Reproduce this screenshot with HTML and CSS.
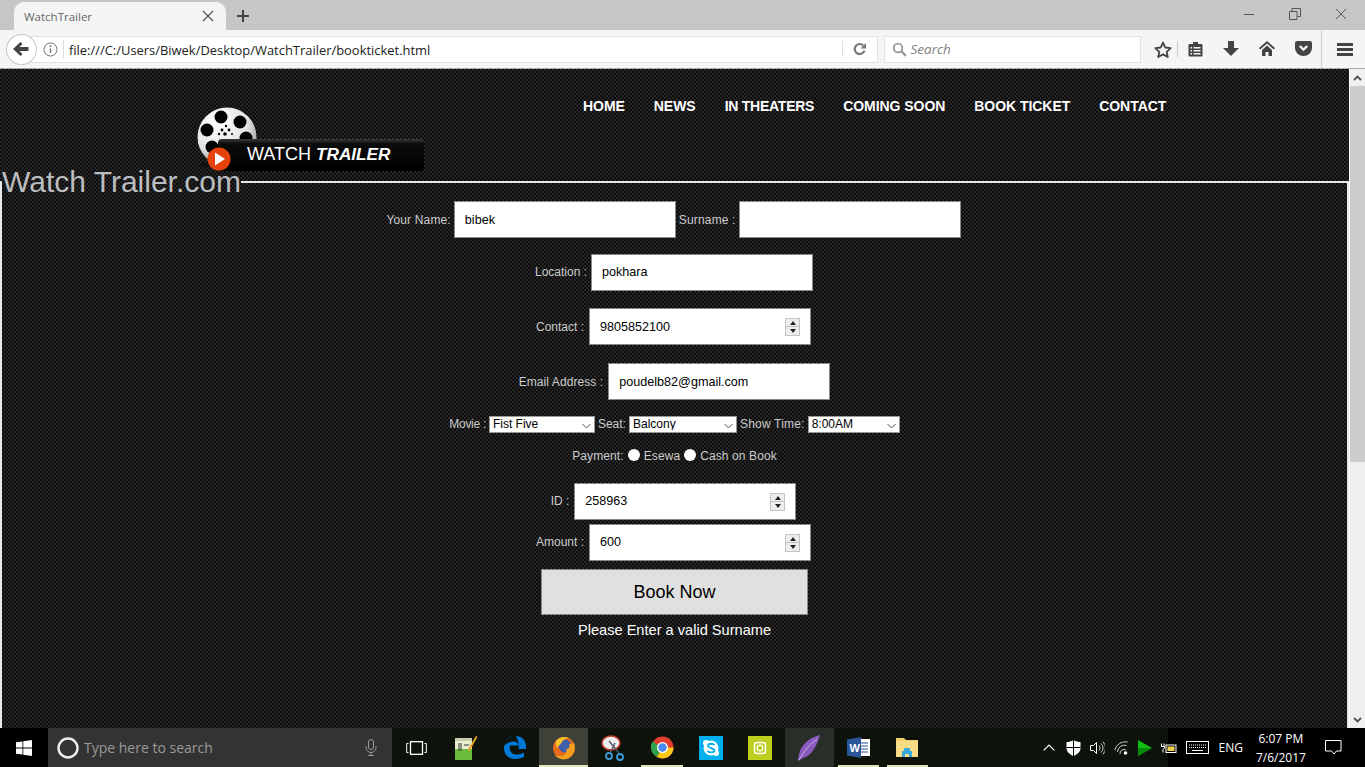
FILE: index.html
```html
<!DOCTYPE html>
<html lang="en">
  <head>
    <meta charset="UTF-8" />
    <title>WatchTrailer</title>
    <link rel="stylesheet" href="styles.css">
  </head>
  <body>
    <div class="tabbar">
      <div class="tab">
        <span class="tab-title">WatchTrailer</span>
        <svg class="tab-close" width="12" height="12" viewBox="0 0 12 12"><path d="M1 1l10 10M11 1L1 11" stroke="#555" stroke-width="1.2"/></svg>
      </div>
      <svg class="new-tab" width="14" height="14" viewBox="0 0 14 14"><path d="M7 1v12M1 7h12" stroke="#444" stroke-width="2"/></svg>
      <div class="win-controls">
        <svg width="12" height="12" viewBox="0 0 12 12"><path d="M1 6.500h10" stroke="#555"/></svg>
        <svg width="12" height="12" viewBox="0 0 12 12"><path d="M.5 3.500h7.500v8h-7.500zM3 3.500v-3h8.500v8h-3" fill="none" stroke="#555"/></svg>
        <svg width="12" height="12" viewBox="0 0 12 12"><path d="M1 1l10 10M11 1L1 11" stroke="#555"/></svg>
      </div>
    </div>

    <div class="toolbar">
      <div class="back-btn">
        <svg width="16" height="14" viewBox="0 0 16 14"><path d="M7.500 0L9.500 2 6.500 5H15.500v4H6.500l3 3-2 2L0 7z" fill="#444"/></svg>
      </div>
      <div class="urlbar">
        <svg class="info" width="15" height="15" viewBox="0 0 15 15"><circle cx="7.500" cy="7.500" r="6.500" fill="none" stroke="#777"/><path d="M7.500 6.500v4.500" stroke="#777" stroke-width="1.500"/><circle cx="7.500" cy="4.300" r="1" fill="#777"/></svg>
        <span class="url">file:///C:/Users/Biwek/Desktop/WatchTrailer/bookticket.html</span>
        <svg class="reload" width="14" height="14" viewBox="0 0 14 14"><path d="M11.500 8.500A5 5 0 1 1 10.300 3.500" fill="none" stroke="#777" stroke-width="2.200"/><path d="M7.500 6.500H13V1z" fill="#777"/></svg>
      </div>
      <div class="searchbar">
        <svg width="15" height="15" viewBox="0 0 15 15"><circle cx="6" cy="6" r="4.300" fill="none" stroke="#999" stroke-width="1.800"/><path d="M9.200 9.200l4.600 4.600" stroke="#999" stroke-width="2.400"/></svg>
        <span class="search-text">Search</span>
      </div>
      <svg class="star" width="18" height="17" viewBox="0 0 18 17"><path d="M9 1.500l2.300 5 5.400.6-4 3.700 1.100 5.300L9 13.400l-4.800 2.700 1.100-5.300-4-3.700 5.400-.6z" fill="none" stroke="#444" stroke-width="1.800" stroke-linejoin="round"/></svg>
      <div class="tool-sep"></div>
      <div class="tool-icons">
        <div class="tool-cell"><svg width="15" height="16" viewBox="0 0 15 16"><path d="M1.500 3H5V1h5v2h3.500a1 1 0 0 1 1 1v10.500a1 1 0 0 1-1 1h-12a1 1 0 0 1-1-1V4a1 1 0 0 1 1-1z" fill="#444"/><path d="M2.500 6H4v1.500H2.500zM5.500 6h7v1.500h-7zM2.500 9H4v1.500H2.500zM5.500 9h7v1.500h-7zM2.500 12H4v1.500H2.500zM5.500 12h7v1.500h-7z" fill="#f5f5f5"/></svg></div>
        <div class="tool-cell"><svg width="16" height="15" viewBox="0 0 16 15"><path d="M5 0h6v7h5l-8 8-8-8h5z" fill="#444"/></svg></div>
        <div class="tool-cell"><svg width="16" height="15" viewBox="0 0 16 15"><path d="M8 0l8 7-1.200 1.400L8 2.600 1.200 8.400 0 7z" fill="#444"/><path d="M3 9l5-4.400L13 9v6H9.500v-4h-3v4H3z" fill="#444"/></svg></div>
        <div class="tool-cell"><svg width="17" height="15" viewBox="0 0 17 15"><path d="M2 0h13a2 2 0 0 1 2 2v5a8.500 8 0 0 1-17 0V2a2 2 0 0 1 2-2z" fill="#444"/><path d="M4.800 5L8.500 8.500 12.200 5" fill="none" stroke="#f5f5f5" stroke-width="2.400"/></svg></div>
      </div>
      <div class="tool-sep tool-sep-b"></div>
      <svg class="menu" width="16" height="13" viewBox="0 0 16 13"><path d="M0 0h16v3H0zM0 5h16v3H0zM0 10h16v3H0z" fill="#444"/></svg>
    </div>

    <div class="viewport">
      <div class="page">
        <header class="site-head">
          <div class="logo">
            <svg width="227" height="65" viewBox="0 0 227 65">
              <defs>
                <radialGradient id="reel" cx="0.35" cy="0.25" r="0.9">
                  <stop offset="0" stop-color="#fff"/>
                  <stop offset="0.55" stop-color="#e4e4e4"/>
                  <stop offset="1" stop-color="#777"/>
                </radialGradient>
                <linearGradient id="bar" x1="0" y1="0" x2="0" y2="1">
                  <stop offset="0" stop-color="#3a3a3a"/>
                  <stop offset="0.15" stop-color="#0c0c0c"/>
                  <stop offset="1" stop-color="#000"/>
                </linearGradient>
              </defs>
              <ellipse cx="14" cy="58" rx="11" ry="3" fill="#111"/>
              <circle cx="30" cy="30" r="29.500" fill="url(#reel)"/>
              <circle cx="24" cy="10" r="6.500"/>
              <circle cx="43" cy="15" r="6.500"/>
              <circle cx="10" cy="23" r="6.500"/>
              <circle cx="49" cy="31" r="6.500"/>
              <circle cx="15" cy="40" r="6.500"/>
              <g>
                <circle cx="29" cy="19" r="1.200"/><circle cx="25" cy="23" r="1.400"/><circle cx="32" cy="23" r="1.400"/><circle cx="22" cy="27" r="1.200"/><circle cx="28" cy="27" r="1.800"/><circle cx="35" cy="27" r="1"/>
              </g>
              <rect x="21" y="32" width="206" height="32" rx="4" fill="url(#bar)"/>
              <circle cx="22" cy="52" r="11.500" fill="#e5430b"/>
              <path d="M18 45.500l10 6.500-10 6.500z" fill="#fff"/>
            </svg>
            <span class="logo-text">WATCH <b>TRAILER</b></span>
          </div>
          <nav class="site-nav">
            <a>HOME</a>
            <a>NEWS</a>
            <a>IN THEATERS</a>
            <a>COMING SOON</a>
            <a>BOOK TICKET</a>
            <a>CONTACT</a>
          </nav>
        </header>

        <fieldset class="box">
          <legend>Watch Trailer.com</legend>
          <form class="book-form">
            <div class="row row-name">
              <label>Your Name:</label>
              <input class="field" type="text" value="bibek" />
              <label>Surname :</label>
              <input class="field" type="text" />
            </div>
            <div class="row row-location">
              <label>Location :</label>
              <input class="field" type="text" value="pokhara" />
            </div>
            <div class="row row-contact">
              <label>Contact :</label>
              <span class="num-wrap">
                <input class="field" type="text" value="9805852100" />
                <span class="spin"><i class="up"></i><i class="down"></i></span>
              </span>
            </div>
            <div class="row row-email">
              <label>Email Address :</label>
              <input class="field" type="text" value="poudelb82@gmail.com" />
            </div>
            <div class="row row-picks">
              <label class="label-movie">Movie :</label>
              <span class="pick pick-movie">
                <select><option>Fist Five</option></select>
                <svg width="9" height="6" viewBox="0 0 9 6"><path d="M.5 1l4 4 4-4" fill="none" stroke="#555"/></svg>
              </span>
              <label>Seat:</label>
              <span class="pick pick-seat">
                <select><option>Balcony</option></select>
                <svg width="9" height="6" viewBox="0 0 9 6"><path d="M.5 1l4 4 4-4" fill="none" stroke="#555"/></svg>
              </span>
              <label class="label-time">Show Time:</label>
              <span class="pick pick-time">
                <select><option>8:00AM</option></select>
                <svg width="9" height="6" viewBox="0 0 9 6"><path d="M.5 1l4 4 4-4" fill="none" stroke="#555"/></svg>
              </span>
            </div>
            <div class="row row-pay">
              <label>Payment:</label>
              <input class="radio" type="radio" name="pay" />
              <label>Esewa</label>
              <input class="radio" type="radio" name="pay" />
              <label>Cash on Book</label>
            </div>
            <div class="row row-id">
              <label>ID :</label>
              <span class="num-wrap">
                <input class="field" type="text" value="258963" />
                <span class="spin"><i class="up"></i><i class="down"></i></span>
              </span>
            </div>
            <div class="row row-amount">
              <label>Amount :</label>
              <span class="num-wrap">
                <input class="field" type="text" value="600" />
                <span class="spin"><i class="up"></i><i class="down"></i></span>
              </span>
            </div>
            <div class="row row-submit">
              <button class="book-btn" type="button">Book Now</button>
            </div>
            <p class="msg">Please Enter a valid Surname</p>
          </form>
        </fieldset>
      </div>
      <div class="scrollbar">
        <div class="sb-btn"><svg width="9" height="6" viewBox="0 0 9 6"><path d="M1 5l3.500-3.500L8 5" fill="none" stroke="#505050" stroke-width="1.800"/></svg></div>
        <div class="sb-thumb"></div>
        <div class="sb-track"></div>
        <div class="sb-btn"><svg width="9" height="6" viewBox="0 0 9 6"><path d="M1 1l3.500 3.500L8 1" fill="none" stroke="#505050" stroke-width="1.800"/></svg></div>
      </div>
    </div>

    <div class="taskbar">
      <div class="start">
        <svg width="16" height="16" viewBox="0 0 16 16"><path d="M0 2.300l6.500-.9v6.200H0zM7.300 1.300L16 0v7.600H7.300zM0 8.400h6.500v6.200L0 13.700zM7.300 8.400H16V16l-8.700-1.300z" fill="#fff"/></svg>
      </div>
      <div class="cortana">
        <svg width="22" height="22" viewBox="0 0 22 22"><circle cx="11" cy="11" r="9.500" fill="none" stroke="#eee" stroke-width="2.400"/></svg>
        <span class="cortana-text">Type here to search</span>
        <svg class="mic" width="12" height="17" viewBox="0 0 12 17"><rect x="3.500" y=".5" width="5" height="10" rx="2.500" fill="none" stroke="#999"/><path d="M1 7v1.500a5 5 0 0 0 10 0V7M6 13.500v3M3 16.500h6" fill="none" stroke="#999"/></svg>
      </div>
      <div class="task-cell">
        <svg width="21" height="14" viewBox="0 0 21 14"><rect x="4.500" y=".7" width="12" height="12.600" fill="none" stroke="#fff" stroke-width="1.300"/><path d="M2.500 2.500H.7v9h1.800M18.500 2.500h1.800v9h-1.800" fill="none" stroke="#fff"/></svg>
      </div>
      <div class="task-cell">
        <svg width="24" height="26" viewBox="0 0 24 26"><path d="M1 3h17v22H1z" fill="#e8eccf"/><path d="M1 14h17v11H1z" fill="#6cbb3c"/><path d="M1 3h17v3H1z" fill="#c9cdb0"/><path d="M5 8v8M7 8v8M10 10h5" stroke="#333" stroke-width="1"/><path d="M22 1l1.500 1-8 14-2-1z" fill="#e8a020"/></svg>
      </div>
      <div class="task-cell">
        <svg width="22" height="23" viewBox="0 0 22 23"><path d="M11 0C4.500 0 .5 4.500 0 10c2.500-3 6-4.500 9-4.500 4 0 5.500 2 5.500 4H6C5 15 8 18.500 11.500 18.500c3.500 0 6-.5 8.500-2v4.300c-2.500 1.500-5.500 2.200-8.500 2.200C5 23 0 19 0 12 0 4.500 5 0 11 0zM12 0c5.500 0 10 4 10 10v3H14.500c1-7-2-11-2.500-13z" fill="#0078d7"/></svg>
      </div>
      <div class="task-cell task-on">
        <svg width="24" height="24" viewBox="0 0 24 24"><circle cx="12" cy="12" r="11" fill="#e66a1f"/><circle cx="13" cy="10" r="6.500" fill="#3f5fa8"/><path d="M22 7c2 6 0 12-5 15-5 3-12 1-15-4 3 3 8 3 11 0 2-2 2-4 1-5 3 0 4-2 3-5 2 0 4-1 5-1z" fill="#f6a01e"/><path d="M4 5c3-4 9-5 13-3-3 0-6 2-7 4-1 2-3 3-5 6-1-2-2-5-1-7z" fill="#f7c22c"/></svg>
      </div>
      <div class="task-cell">
        <svg width="24" height="26" viewBox="0 0 24 26"><ellipse cx="10" cy="8" rx="9" ry="7" fill="#eee" stroke="#c0392b" stroke-width="1.500"/><path d="M8 6l10 12M14 8L9 18" stroke="#556" stroke-width="1.500"/><circle cx="8" cy="21" r="3" fill="none" stroke="#3a9bd8" stroke-width="1.800"/><circle cx="19" cy="22" r="3" fill="none" stroke="#3a9bd8" stroke-width="1.800"/></svg>
      </div>
      <div class="task-cell task-open">
        <svg width="23" height="23" viewBox="0 0 23 23"><circle cx="11.500" cy="11.500" r="11" fill="#e33b2e"/><path d="M11.500 12L6 21a11 11 0 0 1-4.500-15.500z" fill="#2fa24c"/><path d="M11.500 11.500h11A11 11 0 0 1 6 21z" fill="#fbc916"/><circle cx="11.500" cy="11.500" r="5.500" fill="#fff"/><circle cx="11.500" cy="11.500" r="4.200" fill="#4a8af4"/></svg>
      </div>
      <div class="task-cell">
        <svg width="24" height="24" viewBox="0 0 24 24"><rect width="24" height="24" fill="#00aff0"/><circle cx="12" cy="12" r="7.500" fill="#fff"/><circle cx="7" cy="7" r="3" fill="#fff"/><circle cx="17" cy="17" r="3" fill="#fff"/><path d="M15.500 9c-1-1.500-6-2-6.500.5S15.500 12 15.500 14.500 9.500 17 8.500 14.800" fill="none" stroke="#00aff0" stroke-width="1.800"/></svg>
      </div>
      <div class="task-cell">
        <svg width="24" height="24" viewBox="0 0 24 24"><rect width="24" height="24" fill="#bccf1e"/><rect x="6.500" y="6.500" width="11" height="11" rx="2.500" fill="none" stroke="#fff" stroke-width="1.500"/><circle cx="12" cy="12" r="2.800" fill="none" stroke="#fff" stroke-width="1.300"/></svg>
      </div>
      <div class="task-cell task-on-b">
        <svg width="24" height="26" viewBox="0 0 24 26"><path d="M23 0C14 2 6 8 3 16c-1 3-2 7-2 10l2-1c2-2 7-3 10-6 5-5 8-12 10-19z" fill="#8a5cc0"/><path d="M20 4C13 9 7 16 2 25" fill="none" stroke="#c8a8e8"/></svg>
      </div>
      <div class="task-cell task-open">
        <svg width="23" height="21" viewBox="0 0 23 21"><rect x="8" y="2" width="15" height="17" fill="#fff"/><path d="M14 6h7M14 9h7M14 12h7M14 15h7" stroke="#2b579a"/><path d="M0 2.500L14 0v21L0 18.500z" fill="#2b579a"/><text x="2.500" y="14.500" class="word-w">W</text></svg>
      </div>
      <div class="task-cell task-open">
        <svg width="22" height="19" viewBox="0 0 22 19"><path d="M0 0h8l2 2h12v17H0z" fill="#f3cf6a"/><rect y="3" width="22" height="16" fill="#f8dc85"/><path d="M6 19v-6h2v-3h6v3h2v6h-3v-3H9v3z" fill="#35a8e0"/></svg>
      </div>

      <div class="tray">
        <svg width="12" height="7" viewBox="0 0 12 7"><path d="M.7 6.300L6 1l5.300 5.300" fill="none" stroke="#fff" stroke-width="1.200"/></svg>
        <svg class="tray-nudge" width="15" height="16" viewBox="0 0 15 16"><path d="M7.500 0c2 1.500 5 2 7 2v6c0 4-3.500 6.500-7 8-3.500-1.500-7-4-7-8V2c2 0 5-.5 7-2z" fill="#fff"/><path d="M7.500 0v16M.5 7.500h14" stroke="#000"/></svg>
        <svg width="15" height="14" viewBox="0 0 15 14"><path d="M.5 4.500h3l3-3v11l-3-3h-3z" fill="none" stroke="#fff"/><path d="M9 4.500a3.500 3.500 0 0 1 0 5M11 2.500a6 6 0 0 1 0 9M13 .7a9 9 0 0 1 0 12.600" fill="none" stroke="#ccc"/></svg>
        <svg width="15" height="14" viewBox="0 0 15 14"><path d="M.7 9a11 11 0 0 1 13-8M3.500 11a7 7 0 0 1 9-6.500M6 13a4 4 0 0 1 6-4" fill="none" stroke="#ccc"/><circle cx="11.500" cy="12" r="1.800" fill="#fff"/></svg>
        <svg width="14" height="16" viewBox="0 0 14 16"><path d="M0 0l14 8L0 16z" fill="#0fbf0f"/><path d="M0 8h14L0 16z" fill="#078a07"/></svg>
        <svg width="16" height="11" viewBox="0 0 16 11"><path d="M.5 1.500v3M3 1.500v3M0 4.500h3.500v1.500L2 7.500v3" fill="none" stroke="#fff"/><rect x="5" y="3" width="10" height="7.500" fill="none" stroke="#fff"/><rect x="6.500" y="4.500" width="7" height="4.500" fill="#f2d04e"/></svg>
        <svg width="23" height="13" viewBox="0 0 23 13"><rect x=".5" y=".5" width="22" height="12" fill="none" stroke="#fff"/><path d="M3 4h17M3 6.500h17" stroke="#fff" stroke-dasharray="1 1"/><path d="M6 9.500h11" stroke="#fff"/></svg>
        <span class="tray-lang">ENG</span>
        <span class="clock"><span>6:07 PM</span><span>7/6/2017</span></span>
        <svg class="notif" width="17" height="15" viewBox="0 0 17 15"><path d="M.5.5h15.500v10.500h-4.500l-2.500 3-2.500-3H.5z" fill="none" stroke="#fff"/></svg>
      </div>
    </div>
  </body>
</html>
```

FILE: styles.css
```css
* {
  box-sizing: border-box;
}
html,
body {
  margin: 0;
  padding: 0;
  height: 767px;
  overflow: hidden;
}
body {
  font-family: "Liberation Sans", Arial, sans-serif;
  display: flex;
  flex-direction: column;
  width: 1365px;
}

/* browser chrome */
.tabbar {
  height: 30px;
  background-color: #c6c6c6;
  display: flex;
  align-items: flex-end;
  padding-left: 14px;
}
.tab {
  width: 212px;
  height: 28px;
  background-color: #f5f5f5;
  border-radius: 10px 10px 0 0;
  display: flex;
  align-items: center;
  padding: 0 12px 0 10px;
  justify-content: space-between;
}
.tab-title {
  font-family: "Open Sans", sans-serif;
  font-size: 11.5px;
  color: #666;
}
.new-tab {
  margin: 0 0 7px 10px;
}
.win-controls {
  margin-left: auto;
  align-self: flex-start;
  display: flex;
  gap: 34px;
  padding: 8px 18px 0 0;
}
.toolbar {
  height: 39px;
  background-color: #f5f5f5;
  border-bottom: 1px solid #aaa;
  display: flex;
  align-items: center;
  padding: 0 12px 0 6px;
}
.back-btn {
  width: 31px;
  height: 31px;
  background-color: #fff;
  border: 1px solid #c8c8c8;
  border-radius: 50%;
  display: flex;
  align-items: center;
  justify-content: center;
  position: relative;
  z-index: 1;
}
.urlbar {
  width: 850px;
  height: 27px;
  margin-left: -8px;
  background-color: #fff;
  border: 1px solid #e2e2e2;
  display: flex;
  align-items: center;
  padding-left: 13px;
}
.info {
  margin-right: 5px;
}
.url {
  font-family: "Open Sans", sans-serif;
  font-size: 12.93px;
  color: #222;
  border-left: 1px solid #ddd;
  padding: 1px 0 0 5px;
  line-height: 18px;
  flex: 1;
}
.reload {
  box-sizing: content-box;
  border-left: 1px solid #ddd;
  padding: 1px 10px 1px 10px;
}
.searchbar {
  width: 258px;
  height: 27px;
  margin-left: 6px;
  background-color: #fff;
  border: 1px solid #e2e2e2;
  display: flex;
  align-items: center;
  padding-left: 7px;
  gap: 4px;
}
.search-text {
  font-family: "Open Sans", sans-serif;
  font-style: italic;
  font-size: 13.5px;
  color: #808080;
}
.star {
  margin-left: 13px;
}
.tool-sep {
  width: 1px;
  height: 16px;
  background-color: #ccc;
  margin-left: 5px;
}
.tool-sep-b {
  height: 38px;
  margin-left: 0;
}
.tool-icons {
  display: flex;
  margin-left: -1px;
}
.tool-cell {
  width: 36px;
  display: flex;
  justify-content: center;
}
.menu {
  margin-left: 15px;
}

/* page */
.viewport {
  height: 659px;
  display: flex;
}
.page {
  width: 1349px;
  height: 659px;
  overflow: hidden;
  background-color: #141414;
  background-image: repeating-conic-gradient(#0b0b0b 0 25%, #272727 0 50%);
  background-size: 4px 4px;
}
.site-head {
  height: 95px;
  display: flex;
  align-items: flex-start;
}
.logo {
  width: 227px;
  height: 65px;
  margin: 38px 0 0 197px;
  position: relative;
  z-index: 0;
}
.logo svg {
  display: block;
}
.logo-text {
  position: absolute;
  left: 50px;
  top: 37px;
  font-size: 18px;
  color: #fff;
  white-space: nowrap;
}
.logo-text b {
  font-style: italic;
  font-size: 17.2px;
}
.site-nav {
  display: flex;
  gap: 29px;
  margin: 29px 0 0 159px;
}
.site-nav a {
  font-size: 14px;
  font-weight: bold;
  letter-spacing: -0.05px;
  color: #fff;
  line-height: 16px;
}
.site-nav a:nth-child(3) {
  letter-spacing: -0.25px;
}
.box {
  margin: 0;
  padding: 0;
  border: 2px solid #e8e8e8;
  min-width: 0;
  height: 800px;
}
.box legend {
  padding: 0;
  font-size: 30px;
  line-height: 36px;
  color: #bbbdc0;
}
.book-form {
  padding-top: 1px;
}
.row {
  display: flex;
  justify-content: center;
  align-items: center;
  gap: 3px;
}
.row label {
  font-size: 12px;
  color: #ccc;
  white-space: nowrap;
}
.field {
  width: 222px;
  height: 37px;
  padding: 0 10px;
  border: 1px solid #8a8a8a;
  border-radius: 0;
  background-color: #fff;
  font-family: "Liberation Sans", Arial, sans-serif;
  font-size: 12.6px;
  color: #000;
  outline: none;
}
.row-name {
  padding-right: 2px;
}
.row-name label {
  letter-spacing: 0.15px;
}
.row-location {
  margin-top: 16px;
  gap: 4px;
  padding-right: 1px;
}
.row-contact {
  margin-top: 17px;
  gap: 5px;
  padding-right: 2px;
}
.row-email {
  margin-top: 18px;
  gap: 5px;
}
.row-email label {
  letter-spacing: 0.08px;
}
.row-picks {
  margin-top: 16px;
}
.row-picks label {
  margin-bottom: 2px;
}
.row-picks .label-movie {
  letter-spacing: -0.3px;
}
.row-picks .label-time {
  letter-spacing: 0.2px;
}
.row-pay {
  margin-top: 16px;
  height: 14px;
  gap: 4px;
}
.row-pay label {
  letter-spacing: 0.1px;
}
.row-id {
  margin-top: 20px;
  gap: 5px;
  padding-right: 2px;
}
.row-amount {
  margin-top: 4px;
  gap: 5px;
  padding-right: 2px;
}
.row-location label,
.row-id label,
.row-amount label {
  margin-bottom: 2px;
}
.row-location .field,
.row-id .field,
.row-amount .field {
  padding-bottom: 2px;
}
.row-submit {
  margin-top: 8px;
}
.num-wrap {
  position: relative;
  display: block;
  height: 37px;
}
.spin {
  position: absolute;
  right: 11px;
  top: 10px;
  width: 15px;
  height: 18px;
  background-color: #ededed;
  border: 1px solid #c4c4c4;
  display: flex;
  flex-direction: column;
  align-items: center;
  justify-content: space-around;
}
.spin::after {
  content: "";
  position: absolute;
  left: 0;
  right: 0;
  top: 7px;
  height: 1px;
  background-color: #c4c4c4;
}
.spin i {
  display: block;
  width: 0;
  height: 0;
  border-left: 3.5px solid transparent;
  border-right: 3.5px solid transparent;
}
.spin .up {
  border-bottom: 4px solid #222;
}
.spin .down {
  border-top: 4px solid #222;
}
.pick {
  position: relative;
  display: block;
  height: 17px;
}
.pick select {
  appearance: none;
  display: block;
  width: 100%;
  height: 17px;
  padding: 0 0 2px 3px;
  border: 1px solid #999;
  border-radius: 0;
  background-color: #fff;
  font-family: "Liberation Sans", Arial, sans-serif;
  font-size: 12px;
  color: #000;
}
.pick svg {
  position: absolute;
  right: 4px;
  top: 7px;
}
.pick-movie {
  width: 106px;
}
.pick-seat {
  width: 108px;
}
.pick-time {
  width: 92px;
}
.radio {
  appearance: none;
  width: 12px;
  height: 12px;
  margin: -2px 0 0;
  border-radius: 50%;
  background-color: #fff;
}
.book-btn {
  width: 267px;
  height: 46px;
  padding: 0;
  background-color: #e0e0e0;
  border: 1px solid #888;
  border-radius: 0;
  font-family: "Liberation Sans", Arial, sans-serif;
  font-size: 18px;
  color: #000;
}
.msg {
  margin: 7px 0 0;
  font-size: 14.6px;
  line-height: 16px;
  color: #fff;
  text-align: center;
}
.scrollbar {
  width: 16px;
  height: 659px;
  background-color: #f0f0f0;
  border-left: 1px solid #fff;
  display: flex;
  flex-direction: column;
}
.sb-btn {
  height: 17px;
  display: flex;
  align-items: center;
  justify-content: center;
}
.sb-thumb {
  height: 376px;
  background-color: #cdcdcd;
}
.sb-track {
  flex: 1;
}

/* taskbar */
.taskbar {
  height: 39px;
  background-color: #0d120a;
  display: flex;
  align-items: stretch;
}
.start {
  width: 48px;
  background-color: #000;
  display: flex;
  align-items: center;
  justify-content: center;
}
.cortana {
  width: 344px;
  background-color: #333;
  display: flex;
  align-items: center;
  padding: 0 15px 0 9px;
}
.cortana-text {
  font-family: "Open Sans", sans-serif;
  font-size: 14px;
  color: #9a9a9a;
  margin-left: 5px;
}
.mic {
  margin-left: auto;
}
.task-cell {
  width: 49.1px;
  display: flex;
  align-items: center;
  justify-content: center;
  position: relative;
}
.task-on {
  background-color: #3d4138;
}
.task-on-b {
  background-color: #2a2e28;
}
.task-on::after,
.task-open::after {
  content: "";
  position: absolute;
  left: 4px;
  right: 4px;
  bottom: 0;
  height: 2px;
  background-color: #dfe3b8;
}
.task-on::after {
  left: 0;
  right: 0;
}
.word-w {
  font-family: "Liberation Sans", sans-serif;
  font-size: 11px;
  font-weight: bold;
  fill: #fff;
}
.tray {
  margin-left: auto;
  width: 322px;
  display: flex;
  align-items: center;
  gap: 9px;
  background: linear-gradient(90deg, #0d120a 125px, #000 125px);
}
.tray-nudge {
  margin-left: 2px;
}
.tray-lang {
  font-family: "Open Sans", sans-serif;
  font-size: 12px;
  color: #fff;
  margin-left: 0.5px;
}
.clock {
  display: flex;
  flex-direction: column;
  align-items: center;
  font-family: "Open Sans", sans-serif;
  font-size: 12px;
  line-height: 19px;
  color: #fff;
  margin-left: 4px;
}
.notif {
  margin-left: 10.5px;
}
```
